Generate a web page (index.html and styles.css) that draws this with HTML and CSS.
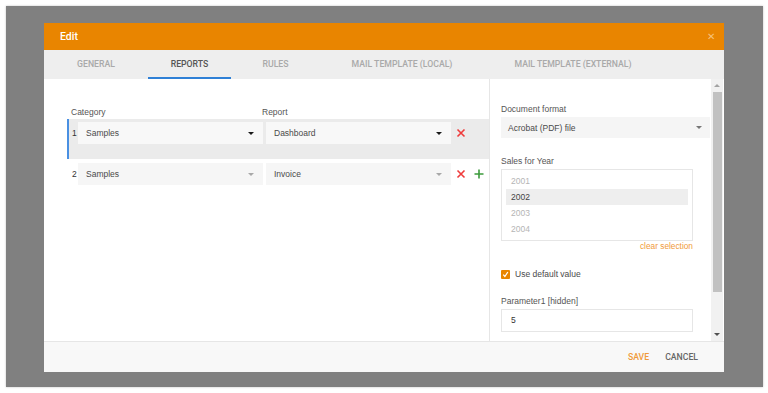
FILE: index.html
```html
<!DOCTYPE html>
<html lang="en">
<head>
  <meta charset="UTF-8">
  <title>Edit</title>
  <link rel="stylesheet" href="styles.css">
</head>
<body>
  <div class="backdrop">
    <div class="dialog">
      <div class="dialog-header">
        <span class="dialog-title">Edit</span>
        <span class="dialog-close">&#x2715;</span>
      </div>

      <div class="tabs">
        <div class="tab tab-general">General</div>
        <div class="tab tab-reports active">Reports</div>
        <div class="tab tab-rules">Rules</div>
        <div class="tab tab-local">Mail template (local)</div>
        <div class="tab tab-external">Mail template (external)</div>
      </div>

      <div class="dialog-body">
        <!-- reports list -->
        <div class="reports">
          <div class="reports-labels">
            <span class="label-category">Category</span>
            <span class="label-report">Report</span>
          </div>

          <div class="report-row selected">
            <span class="row-num">1</span>
            <div class="select"><span>Samples</span><i class="caret"></i></div>
            <div class="select"><span>Dashboard</span><i class="caret"></i></div>
            <div class="row-actions">
              <svg class="icon" viewBox="0 0 10 10"><path d="M1.5 1.5 L8.5 8.5 M8.5 1.5 L1.5 8.5" stroke="#ef3b3b" stroke-width="1.6"/></svg>
            </div>
          </div>

          <div class="report-row">
            <span class="row-num">2</span>
            <div class="select"><span>Samples</span><i class="caret light"></i></div>
            <div class="select"><span>Invoice</span><i class="caret light"></i></div>
            <div class="row-actions">
              <svg class="icon" viewBox="0 0 10 10"><path d="M1.5 1.5 L8.5 8.5 M8.5 1.5 L1.5 8.5" stroke="#ef3b3b" stroke-width="1.6"/></svg>
              <svg class="icon" viewBox="0 0 10 10"><path d="M5 0.5 V9.5 M0.5 5 H9.5" stroke="#3c9b3c" stroke-width="1.6"/></svg>
            </div>
          </div>
        </div>

        <!-- parameters -->
        <div class="params">
          <div class="params-content">
            <div class="field-label">Document format</div>
            <div class="select format-select"><span>Acrobat (PDF) file</span><i class="caret mid"></i></div>

            <div class="field-label spaced">Sales for Year</div>
            <div class="listbox">
              <div class="list-item">2001</div>
              <div class="list-item selected">2002</div>
              <div class="list-item">2003</div>
              <div class="list-item">2004</div>
            </div>
            <div class="clear-link">clear selection</div>

            <label class="check-row">
              <span class="checkbox">
                <svg viewBox="0 0 10 10"><path d="M2.5 5.2 L4.3 7.2 L7.6 2.2" stroke="#fff" stroke-width="1.4" fill="none"/></svg>
              </span>
              Use default value
            </label>

            <div class="field-label param-label">Parameter1 [hidden]</div>
            <div class="text-input">5</div>
          </div>
          <div class="scrollbar">
            <i class="sb-arrow up"></i>
            <div class="sb-thumb"></div>
            <i class="sb-arrow down"></i>
          </div>
        </div>
      </div>

      <div class="dialog-footer">
        <span class="btn btn-save">Save</span>
        <span class="btn btn-cancel">Cancel</span>
      </div>
    </div>
  </div>
</body>
</html>
```

FILE: styles.css
```css
:root {
  --orange: #e98500;
  --text: #4a4a4a;
  --label: #555;
  --muted: #b5b5b5;
  --line: #e6e6e6;
  --field: #f6f6f6;
}
* {
  box-sizing: border-box;
}
body {
  margin: 0;
  padding: 6px;
  background: #fff;
  font-family: "Liberation Sans", Arial, sans-serif;
  font-size: 8.5px;
  color: var(--text);
}
.backdrop {
  width: 757px;
  height: 381px;
  background: #808080;
  padding: 17px 0 0 38px;
  box-shadow: 0 0 2px rgba(0,0,0,0.25);
}
.dialog {
  width: 680px;
  height: 349px;
  background: #fff;
  display: flex;
  flex-direction: column;
}
.dialog-header {
  height: 27px;
  background: var(--orange);
  color: #fff;
  display: flex;
  align-items: center;
  justify-content: space-between;
  padding: 0 9px 0 16px;
}
.dialog-title {
  font-family: Roboto, "Liberation Sans", sans-serif;
  font-size: 10.5px;
  font-weight: 500;
}
.dialog-close {
  color: #f7c27c;
  font-size: 10px;
}
.tabs {
  height: 29px;
  background: #eeeeee;
  display: flex;
}
.tab {
  display: flex;
  align-items: center;
  justify-content: center;
  text-transform: uppercase;
  font-family: Roboto, "Liberation Sans", sans-serif;
  font-size: 8.7px;
  font-weight: 500;
  color: #a9a9a9;
  border-bottom: 2px solid transparent;
  padding-top: 1px;
}
.tab.active {
  color: #555;
  border-bottom-color: #2f80d6;
}
.tab-general { width: 104px; }
.tab-reports { width: 83px; }
.tab-rules { width: 89px; }
.tab-local { width: 164px; }
.tab-external { width: 178px; }

.dialog-body {
  flex: 1;
  display: flex;
  min-height: 0;
}
.reports {
  width: 446px;
  border-right: 1px solid var(--line);
  padding: 27px 0 0 23px;
}
.reports-labels {
  display: flex;
  height: 12px;
  line-height: 12px;
  margin-bottom: 1px;
  color: var(--label);
}
.label-category {
  width: 195px;
  padding-left: 4px;
}
.report-row {
  display: flex;
  align-items: flex-start;
  height: 22px;
  margin-top: 4px;
  border-left: 2px solid transparent;
}
.report-row.selected {
  height: 40px;
  margin-top: 0;
  padding-top: 3px;
  background: #ebebeb;
  border-left-color: #4a90e2;
}
.row-num {
  width: 9px;
  height: 22px;
  line-height: 22px;
  padding-left: 3px;
  color: #333;
}
.select {
  width: 185px;
  height: 22px;
  background: var(--field);
  display: flex;
  align-items: center;
  justify-content: space-between;
  padding: 0 9px 0 8px;
  color: var(--text);
  margin-right: 3px;
}
.report-row.selected .select {
  background: #f8f8f8;
}
.caret {
  width: 0;
  height: 0;
  border-left: 3.5px solid transparent;
  border-right: 3.5px solid transparent;
  border-top: 3.5px solid #1a1a1a;
}
.caret.light {
  border-top-color: #a8a8a8;
}
.caret.mid {
  border-top-color: #777;
}
.row-actions {
  display: flex;
  gap: 8px;
  height: 22px;
  align-items: center;
  padding-left: 2px;
}
.icon {
  width: 10px;
  height: 10px;
}

.params {
  flex: 1;
  display: flex;
}
.params-content {
  flex: 1;
  padding: 24px 1px 0 11px;
}
.field-label {
  height: 12px;
  line-height: 12px;
  margin-bottom: 2px;
  color: var(--label);
}
.field-label.spaced {
  margin-top: 17px;
}
.format-select {
  width: 100%;
  height: 21px;
  padding: 0 8px 0 7px;
  margin: 0;
  background: #f5f5f5;
}
.listbox {
  width: 192px;
  height: 72px;
  border: 1px solid var(--line);
  padding: 3px 4px;
}
.list-item {
  height: 16px;
  line-height: 16px;
  padding-left: 5px;
  color: var(--muted);
}
.list-item.selected {
  background: #eeeeee;
  color: #444;
}
.clear-link {
  width: 192px;
  text-align: right;
  color: #f09a3a;
  font-size: 8.3px;
  line-height: 11px;
}
.check-row {
  display: flex;
  align-items: center;
  gap: 5px;
  height: 12px;
  margin-top: 16px;
  color: var(--text);
}
.checkbox {
  width: 9px;
  height: 9px;
  background: var(--orange);
  border-radius: 1px;
  display: flex;
}
.checkbox svg {
  width: 9px;
  height: 9px;
}
.param-label {
  margin-top: 15px;
}
.text-input {
  width: 192px;
  height: 23px;
  border: 1px solid var(--line);
  line-height: 21px;
  padding-left: 9px;
  color: #333;
}
.scrollbar {
  width: 12px;
  margin-right: 1px;
  background: #f1f1f1;
  display: flex;
  flex-direction: column;
  align-items: center;
  padding: 5px 0 5px;
}
.sb-arrow {
  width: 0;
  height: 0;
  border-left: 3px solid transparent;
  border-right: 3px solid transparent;
}
.sb-arrow.up {
  border-bottom: 3px solid #a3a3a3;
}
.sb-arrow.down {
  border-top: 3px solid #505050;
  margin-top: auto;
}
.sb-thumb {
  width: 9px;
  height: 200px;
  margin-top: 5px;
  background: #c1c1c1;
}

.dialog-footer {
  height: 31px;
  background: #f8f8f8;
  border-top: 1px solid var(--line);
  display: flex;
  justify-content: flex-end;
  align-items: center;
  gap: 16px;
  padding-right: 26px;
}
.btn {
  text-transform: uppercase;
  font-family: Roboto, "Liberation Sans", sans-serif;
  font-size: 8.7px;
  font-weight: 500;
}
.btn-save {
  color: #f09a3a;
}
.btn-cancel {
  color: #666;
}
```
